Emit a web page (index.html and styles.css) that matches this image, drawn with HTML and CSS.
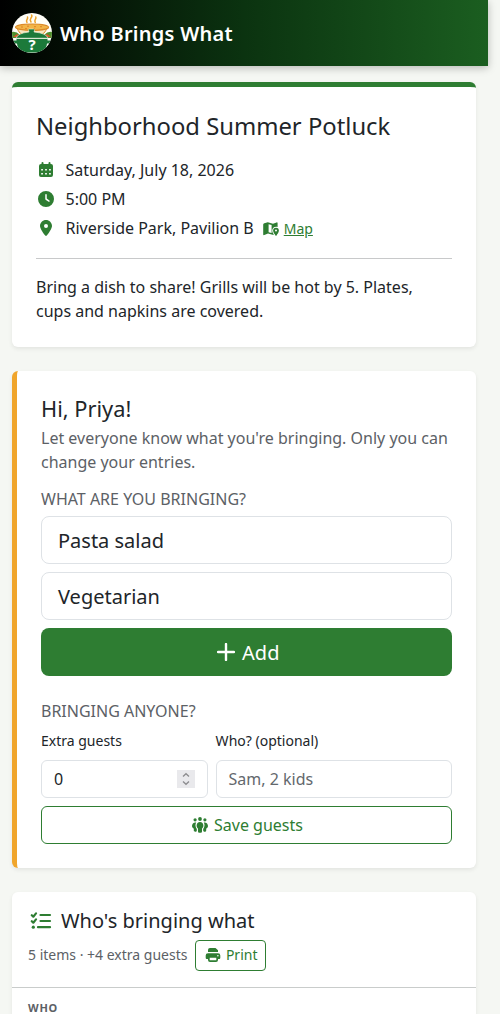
FILE: index.html
```html
<!DOCTYPE html>
<html lang="en">
<head>
<meta charset="utf-8">
<title>Who Brings What</title>
<link rel="stylesheet" href="styles.css">
</head>
<body>
<header class="navbar">
  <svg class="logo" viewBox="0 0 40 40" aria-hidden="true">
    <defs><clipPath id="disc"><circle cx="20" cy="20" r="20"/></clipPath></defs>
    <g clip-path="url(#disc)">
      <rect width="40" height="40" fill="#fffef8"/>
      <path d="M15 9.500q-1-1.500 0-3t.5-2.500M19 9q-1.500-2 0-4t.5-3M23.300 9.500q-1-1.500 0-3t.5-2.500" fill="none" stroke="#eda22b" stroke-width="1.500" stroke-linecap="round"/>
      <path d="M0 19q4-1 8 3l2 3H0zM40 19q-4-1-8 3l-2 3h10z" fill="#4f8f2e"/>
      <path d="M1 24l4-3 5 3zM39 24l-4-3-5 3z" fill="#d9572a"/>
      <path d="M5 14.500q2 7 8 8h14q6-1 8-8z" fill="#f7e6c0" stroke="#dc861f" stroke-width="1"/>
      <ellipse cx="20" cy="14.200" rx="16.500" ry="3.200" fill="#f2b548" stroke="#dc8a28" stroke-width="1.200"/>
      <path d="M9 14h2m4-.8h2m5 .5h2m4 0h2m-17 2h2m6 .3h2" stroke="#dc7a22" stroke-width=".9"/>
      <path d="M4 25.200q1.500-5 13-6.200-1.500-3 .5-3h4q2 0 .5 3Q34.500 20.200 36 25.200z" fill="#1c7a3a" stroke="#f7f5df" stroke-width=".6"/>
      <path d="M0 40V29l5.500 1q.5 7 5.500 10zM40 40V29l-5.500 1q-.5 7-5.500 10z" fill="#fffef8"/>
      <path d="M4.500 26h31v1.500h3l-.5 3h-3q-.5 6-5 9H10q-4.500-3-5-9H2l-.5-3h3z" fill="#1c7a3a"/>
      <text class="logo-mark" x="20" y="37" text-anchor="middle">?</text>
    </g>
  </svg>
  <span class="brand">Who Brings What</span>
</header>
<main class="page">
  <section class="card event">
    <h1 class="event-title">Neighborhood Summer Potluck</h1>
    <div class="detail">
      <svg class="icon" viewBox="0 0 20 16"><path fill-rule="evenodd" d="M6.500 0a1 1 0 0 1 1 1v1h5V1a1 1 0 0 1 2 0v1h.5a2 2 0 0 1 2 2v9a2 2 0 0 1-2 2H5a2 2 0 0 1-2-2V4a2 2 0 0 1 2-2h.5V1a1 1 0 0 1 1-1zM5.200 7v1.600h1.700V7zm3.950 0v1.600h1.700V7zm3.950 0v1.600h1.700V7zM5.200 11v1.600h1.700V11zm3.950 0v1.600h1.700V11zm3.950 0v1.600h1.700V11z"/></svg>
      <span>Saturday, July 18, 2026</span>
    </div>
    <div class="detail">
      <svg class="icon" viewBox="-64 0 640 512"><path fill-rule="evenodd" d="M256 0a256 256 0 1 1 0 512A256 256 0 1 1 256 0zM232 120l0 136c0 8 4 15.500 10.700 20l96 64c11 7.400 25.900 4.400 33.300-6.700s4.400-25.900-6.700-33.300L280 243.200 280 120c0-13.300-10.700-24-24-24s-24 10.700-24 24z"/></svg>
      <span>5:00 PM</span>
    </div>
    <div class="detail">
      <svg class="icon" viewBox="-128 0 640 512"><path fill-rule="evenodd" d="M215.700 499.200C267 435 384 279.400 384 192C384 86 298 0 192 0S0 86 0 192c0 87.400 117 243 168.300 307.200c12.300 15.300 35.100 15.300 47.400 0zM192 128a64 64 0 1 1 0 128 64 64 0 1 1 0-128z"/></svg>
      <span>Riverside Park, Pavilion B</span>
      <a class="map">
        <svg class="map-icon" viewBox="0 0 16 14"><path fill-rule="evenodd" d="M1.300 1.300 4.800.2 10 1.800 13.600.4c.5-.2 1 .1 1 .6v3.900c-2.800-.9-5.400.9-5.400 3.700 0 1.300.6 2.500 1.400 3.600v.7L5 11.600l-3.700 1.500c-.6.200-1.100-.1-1.100-.7V2.600c0-.6.400-1.100 1.100-1.300zM5.600 2.200v8l3 .9V3.100z"/><path fill-rule="evenodd" d="M13 5.700a2.900 2.900 0 0 1 2.900 2.900c0 1.700-1.500 3.700-2.400 4.900a.6.600 0 0 1-1 0c-.9-1.200-2.400-3.200-2.400-4.900A2.900 2.900 0 0 1 13 5.700zm0 1.900a1 1 0 1 0 0 2 1 1 0 0 0 0-2z"/></svg>
        <span class="map-text">Map</span>
      </a>
    </div>
    <hr class="rule">
    <p class="note">Bring a dish to share! Grills will be hot by 5. Plates, cups and napkins are covered.</p>
  </section>

  <section class="card entry">
    <h2 class="greeting">Hi, Priya!</h2>
    <p class="muted">Let everyone know what you're bringing. Only you can change your entries.</p>
    <div class="section-label">WHAT ARE YOU BRINGING?</div>
    <div class="field field-lg">Pasta salad</div>
    <div class="field field-lg">Vegetarian</div>
    <div class="button button-add">
      <svg class="plus" viewBox="0 0 18 18"><path d="M9 1v16M1 9h16"/></svg>
      <span>Add</span>
    </div>
    <div class="section-label guests-label">BRINGING ANYONE?</div>
    <div class="guests">
      <div>
        <div class="small-label">Extra guests</div>
        <div class="field number"><span>0</span>
          <span class="spinner"><svg class="arrows" viewBox="0 0 18 18"><path d="M6 6.500 9 3.700l3 2.800M6 11.500l3 2.800 3-2.800"/></svg></span>
        </div>
      </div>
      <div>
        <div class="small-label who-label">Who? (optional)</div>
        <div class="field placeholder">Sam, 2 kids</div>
      </div>
    </div>
    <div class="button button-save">
      <svg class="people" viewBox="0 0 16 16"><circle cx="8" cy="2" r="1.900"/><circle cx="3.100" cy="2.800" r="1.600"/><circle cx="12.900" cy="2.800" r="1.600"/><path d="M8 4.900c2.100 0 3.400 1.500 3.400 3.600 0 1.400-.6 2.400-1.400 3v3.100a1.200 1.200 0 0 1-1.200 1.200H7.200A1.200 1.200 0 0 1 6 14.600v-3.100c-.8-.6-1.400-1.600-1.400-3C4.600 6.400 5.900 4.900 8 4.900zM4.200 5.500C3.100 7.200 3.200 10 4.800 11.900v1.600c0 .8-.4 1.200-1 1.200h-.9c-.7 0-1.100-.4-1.100-1.200v-2C.7 11 0 10.100 0 8.900c0-2.200 1.800-3.900 4.200-3.400zM11.800 5.500c1.100 1.700 1 4.500-.6 6.400v1.600c0 .8.400 1.200 1 1.200h.9c.7 0 1.100-.4 1.100-1.200v-2c1.100-.5 1.800-1.400 1.800-2.600 0-2.200-1.800-3.900-4.200-3.400z"/></svg>
      <span>Save guests</span>
    </div>
  </section>

  <section class="card list">
    <div class="list-head">
      <h2 class="list-title">
        <svg class="checks" viewBox="0 0 22 18"><path d="M1.800 3.200 3.300 4.700 6 1.400M1.800 9.200l1.500 1.500L6 7.400M10.500 3h9.500M10.500 9h9.500M8 15.200h12"/><circle cx="3.300" cy="15.200" r="1.600"/></svg>
        <span>Who's bringing what</span>
      </h2>
      <div class="summary">
        <span>5 items · +4 extra guests</span>
        <span class="print">
          <svg class="printer" viewBox="0 0 16 16"><path fill-rule="evenodd" d="M5 1h5.500L13 3.300V5H3V3a2 2 0 0 1 2-2zM3 6.200h10a2.300 2.300 0 0 1 2.300 2.300v2.200c0 .8-.5 1.300-1.300 1.300h-1v1a2 2 0 0 1-2 2H5a2 2 0 0 1-2-2v-1H2c-.8 0-1.300-.5-1.300-1.300V8.500A2.300 2.300 0 0 1 3 6.200zm1.700 4.600v2.500h6.600v-2.500zm8.200-2.900a.8.800 0 1 0 0 1.600.8.800 0 0 0 0-1.600z"/></svg>
          <span>Print</span>
        </span>
      </div>
    </div>
    <div class="column-head">WHO</div>
  </section>
</main>
</body>
</html>
```

FILE: styles.css
```css
* { box-sizing: border-box; }
body {
  margin: 0;
  height: 1014px;
  overflow: hidden;
  background: #f5f7f3;
  color: #212529;
  font: 16px/24px "Noto Sans", sans-serif;
}
h1, h2, p { margin: 0; font-weight: 400; }
svg { flex: none; fill: currentColor; }
.navbar {
  width: 488px;
  height: 66px;
  padding: 0 12px;
  display: flex;
  align-items: center;
  gap: 8px;
  color: #fff;
  background: linear-gradient(90deg, #000 0%, #0b3310 50%, #1b5e20 100%);
  box-shadow: 0 2px 8px rgba(0, 0, 0, .25);
}
.logo { width: 40px; height: 40px; }
.logo-mark { font: 700 15px "Noto Sans", sans-serif; fill: #fff; }
.brand { font-size: 20px; font-weight: 600; letter-spacing: .27px; line-height: 30px; padding-top: 2px; white-space: nowrap; }
.page { width: 488px; padding: 16px 12px 0; display: grid; gap: 24px; }
.card {
  background: #fff;
  border-radius: 6px;
  box-shadow: 0 2px 4px rgba(0, 0, 0, .075);
}
.event { border-top: 5px solid #2e7d32; padding: 24px; height: 265px; }
.event-title { font-size: 23.800px; line-height: 29px; margin: 1px 0 17px; }
.detail { display: flex; align-items: center; height: 24px; margin-bottom: 5px; }
.icon { width: 20px; height: 16px; margin-right: 9.500px; color: #2e7d32; }
.map { display: flex; align-items: center; margin-left: 9.500px; color: #2e7d32; font-size: 14px; }
.map-icon { width: 16px; height: 14px; margin: 2px 4.500px 0 0; }
.map-text { text-decoration: underline; padding-top: 1px; }
.rule { border: 0; height: 1px; background: #c8c9ca; margin: 18px 0 16px; }
.entry { border-left: 5px solid #f0a52b; padding: 24px; height: 497px; }
.greeting { font-size: 21.800px; line-height: 27px; margin-bottom: 4px; }
.muted, .section-label { color: #5c6166; }
.section-label { margin: 13px 0 5px; }
.field {
  height: 38px;
  border: 1px solid #dee2e6;
  border-radius: 6px;
  padding: 0 12px;
  display: flex;
  align-items: center;
}
.field-lg { height: 48px; border-radius: 8px; padding: 2px 16px 0; font-size: 20px; margin-bottom: 8px; }
.button { display: flex; align-items: center; justify-content: center; }
.button-add { height: 48px; border-radius: 8px; background: #2e7d32; color: #fff; font-size: 20px; gap: 7.500px; padding: 2px 0 0 3px; }
.plus { width: 18px; height: 18px; margin-bottom: 2px; fill: none; stroke: currentColor; stroke-width: 2.400; stroke-linecap: round; }
.guests-label { margin: 23px 0 7px; }
.guests { display: grid; grid-template-columns: 167px 236px; gap: 8px; }
.small-label { font-size: 14px; line-height: 21px; margin-bottom: 9px; }
.who-label { margin-left: -.4px; }
.number { justify-content: space-between; }
.spinner { width: 18px; height: 18px; background: #e9e9ec; display: flex; }
.arrows { width: 18px; height: 18px; fill: none; stroke: #8c8c8f; stroke-width: 1.300; }
.placeholder { color: #63686d; padding-left: 11.500px; }
.button-save { height: 38px; margin-top: 8px; border: 1px solid #2e7d32; border-radius: 6px; color: #2e7d32; gap: 6px; padding-left: 2px; }
.people { width: 16px; height: 16px; }
.list { height: 150px; }
.list-head { height: 96px; padding: 17px 16px 0; border-bottom: 1px solid #c9cccb; }
.list-title { display: flex; align-items: center; font-size: 20px; line-height: 24px; gap: 9px; padding-left: 2px; }
.checks { width: 22px; height: 18px; margin-top: -1px; color: #2e7d32; fill: none; stroke: currentColor; stroke-width: 2.200; stroke-linecap: round; stroke-linejoin: round; }
.checks circle { fill: currentColor; stroke: none; }
.summary { display: flex; align-items: center; gap: 8px; margin-top: 7px; font-size: 14px; line-height: 22px; color: #5c6166; }
.summary > span:first-child { padding-bottom: 1px; }
.print { height: 31px; border: 1px solid #2e7d32; border-radius: 4px; padding: 0 7.500px 1px 9px; display: flex; align-items: center; gap: 4.500px; color: #2e7d32; }
.printer { width: 16px; height: 16px; }
.column-head { padding: 8px 16px; font-size: 11px; font-weight: 700; letter-spacing: .75px; color: #5c6166; }
```
